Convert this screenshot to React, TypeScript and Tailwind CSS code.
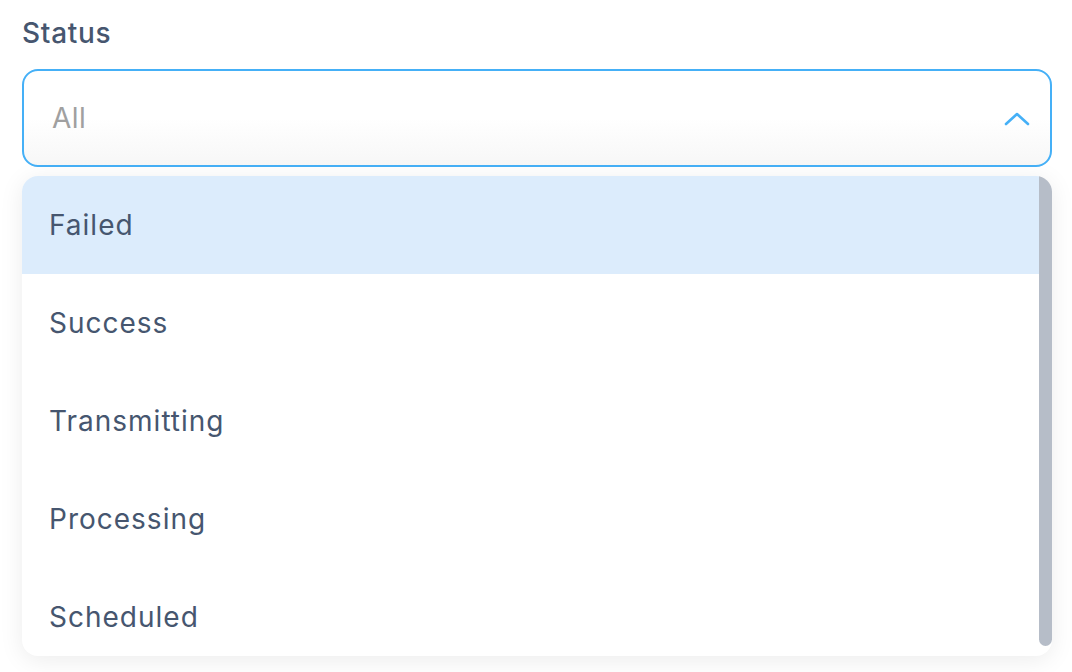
const options = ['Failed', 'Success', 'Transmitting', 'Processing', 'Scheduled'];

export default function App() {
  return (
    <div className="min-h-[672px] w-full bg-white pl-[22px] pr-[20px] pt-[13px] font-['Inter',sans-serif]">
      <label className="block text-[28px] font-medium leading-[40px] tracking-[0.7px] text-[#46566f]">Status</label>
      <div className="mt-[16px] flex h-[98px] items-center justify-between rounded-[16px] border-2 border-[#45b0f7] bg-gradient-to-b from-white via-white to-[#f7f7f7] pl-[28px] pr-[20px]">
        <span className="text-[28px] tracking-[0.5px] text-[#a0a0a0]">All</span>
        <svg width="26" height="16" viewBox="0 0 26 16" fill="none" className="mt-[2px]">
          <path d="M2 13 L13 3 L24 13" stroke="#45b0f7" strokeWidth="2.6" strokeLinecap="round" strokeLinejoin="round" />
        </svg>
      </div>
      <div className="mt-[9px] flex h-[480px] overflow-hidden rounded-[16px] bg-white shadow-[0_4px_24px_rgba(0,0,0,0.08)]">
        <ul className="flex-1">
          {options.map((o, i) => (
            <li
              key={o}
              className={`flex h-[98px] items-center pl-[27px] text-[28px] tracking-[1px] text-[#46566f] ${i === 0 ? 'bg-[#dcecfc]' : ''}`}
            >
              {o}
            </li>
          ))}
        </ul>
        <div className="w-[13px] pb-[10px]">
          <div className="h-full rounded-b-full bg-[#b6bdc8]" />
        </div>
      </div>
    </div>
  );
}
